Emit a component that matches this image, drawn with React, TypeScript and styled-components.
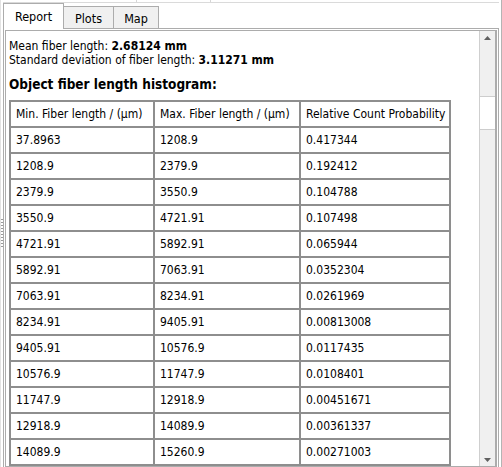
import React from "react";
import styled, { createGlobalStyle } from "styled-components";

const Global = createGlobalStyle`
  html, body { margin: 0; padding: 0; background: #ffffff; }
  body { font-family: "DejaVu Sans Condensed", "DejaVu Sans", sans-serif; color: #000; }
`;

const FONT = `"DejaVu Sans Condensed", "DejaVu Sans", sans-serif`;

const Window = styled.div`
  width: 501px;
  height: 467px;
  border-right: 1px solid #b4b4b4;
  display: flex;
  flex-direction: row;
  overflow: hidden;
  background: #fff;
`;

const LeftEdge = styled.div`
  width: 3px;
  display: flex;
  flex-direction: column;
  justify-content: center;
  border-left: 1px solid #e3e3e3;
  box-sizing: border-box;
`;

const Grip = styled.div`
  width: 2px;
  height: 30px;
  background: repeating-linear-gradient(to bottom, #9a9a9a 0 1px, transparent 1px 3px);
`;

const Main = styled.div`
  width: 496px;
  display: flex;
  flex-direction: column;
`;

const TopStrip = styled.div`
  height: 3px;
  display: flex;
  border-bottom: 1px solid #dadada;
  box-sizing: border-box;
`;

const StripCell = styled.div<{ $w: number }>`
  width: ${(p) => p.$w}px;
  border-right: 1px solid #d6d6d6;
  box-sizing: border-box;
`;

const TabBar = styled.div`
  height: 26px;
  display: flex;
  align-items: flex-end;
  position: relative;
  z-index: 1;
  margin-bottom: -1px;
`;

const Tab = styled.div<{ $active?: boolean; $w: number }>`
  width: ${(p) => p.$w}px;
  height: ${(p) => (p.$active ? 26 : 23)}px;
  box-sizing: border-box;
  border: 1px solid #acacac;
  border-bottom: ${(p) => (p.$active ? "none" : "1px solid #acacac")};
  background: ${(p) => (p.$active ? "#ffffff" : "#f0f0f0")};
  margin-left: ${(p) => (p.$active ? 0 : -1)}px;
  display: flex;
  align-items: center;
  justify-content: center;
  padding-top: ${(p) => (p.$active ? 0 : 2)}px;
  font-family: ${FONT};
  font-size: 12.5px;
  color: #000;
`;

const Pane = styled.div`
  flex: 1;
  border: 1px solid #acacac;
  border-bottom: none;
  padding: 1px 1px 0 1px;
  display: flex;
  flex-direction: column;
  min-height: 0;
`;

const Frame = styled.div`
  flex: 1;
  border: 1px solid #acacac;
  border-right-width: 2px;
  display: flex;
  flex-direction: row;
  min-height: 0;
  overflow: hidden;
`;

const Viewport = styled.div`
  flex: 1;
  overflow: hidden;
  padding: 8px 0 0 3px;
  font-family: ${FONT};
  font-size: 12px;
`;

const InfoLine = styled.div`
  line-height: 14px;
  white-space: nowrap;
`;

const Heading = styled.div`
  font-weight: bold;
  font-size: 13.5px;
  line-height: 16px;
  margin-top: 9px;
  margin-bottom: 8px;
  white-space: nowrap;
`;

const Table = styled.table`
  border-collapse: separate;
  border-spacing: 0;
  border: 1px solid #8e8e8e;
  table-layout: fixed;
  width: 440px;
`;

const Cell = styled.td`
  border: 1px solid #8e8e8e;
  padding: 0 0 0 5px;
  font-family: ${FONT};
  font-size: 12px;
  white-space: nowrap;
  overflow: hidden;
  box-sizing: border-box;
  height: 26px;
`;

const Scrollbar = styled.div`
  width: 15px;
  border-left: 1px solid #cfcfcf;
  display: flex;
  flex-direction: column;
  background: #f0f0f0;
`;

const ArrowBtn = styled.div`
  height: 13px;
  display: flex;
  align-items: center;
  justify-content: center;
  background: #f0f0f0;
`;

const Thumb = styled.div`
  height: 52px;
  background: #f0f0f0;
  border-bottom: 1px solid #cdcdcd;
`;

const ThumbLight = styled.div`
  height: 32px;
  background: #ffffff;
  border-bottom: 1px solid #cdcdcd;
`;

const Track = styled.div`
  flex: 1;
  background: #f0f0f0;
`;

const rows: [string, string, string][] = [
  ["37.8963", "1208.9", "0.417344"],
  ["1208.9", "2379.9", "0.192412"],
  ["2379.9", "3550.9", "0.104788"],
  ["3550.9", "4721.91", "0.107498"],
  ["4721.91", "5892.91", "0.065944"],
  ["5892.91", "7063.91", "0.0352304"],
  ["7063.91", "8234.91", "0.0261969"],
  ["8234.91", "9405.91", "0.00813008"],
  ["9405.91", "10576.9", "0.0117435"],
  ["10576.9", "11747.9", "0.0108401"],
  ["11747.9", "12918.9", "0.00451671"],
  ["12918.9", "14089.9", "0.00361337"],
  ["14089.9", "15260.9", "0.00271003"],
];

const Arrow = ({ up }: { up?: boolean }) => (
  <svg width="7" height="4" viewBox="0 0 7 4">
    <polygon points={up ? "0,4 7,4 3.5,0" : "0,0 7,0 3.5,4"} fill="#606060" />
  </svg>
);

export default function App() {
  return (
    <>
      <Global />
      <Window>
        <LeftEdge>
          <Grip />
        </LeftEdge>
        <Main>
          <TopStrip>
            <StripCell $w={134} />
            <StripCell $w={74} />
          </TopStrip>
          <TabBar>
            <Tab $active $w={61}>Report</Tab>
            <Tab $w={51}>Plots</Tab>
            <Tab $w={46}>Map</Tab>
          </TabBar>
          <Pane>
            <Frame>
              <Viewport>
                <InfoLine>
                  Mean fiber length: <b>2.68124 mm</b>
                </InfoLine>
                <InfoLine>
                  Standard deviation of fiber length: <b>3.11271 mm</b>
                </InfoLine>
                <Heading>Object fiber length histogram:</Heading>
                <Table>
                  <colgroup>
                    <col style={{ width: 144 }} />
                    <col style={{ width: 146 }} />
                    <col style={{ width: 150 }} />
                  </colgroup>
                  <tbody>
                    <tr>
                      <Cell>Min. Fiber length / (µm)</Cell>
                      <Cell>Max. Fiber length / (µm)</Cell>
                      <Cell>Relative Count Probability</Cell>
                    </tr>
                    {rows.map((r, i) => (
                      <tr key={i}>
                        <Cell>{r[0]}</Cell>
                        <Cell>{r[1]}</Cell>
                        <Cell>{r[2]}</Cell>
                      </tr>
                    ))}
                  </tbody>
                </Table>
              </Viewport>
              <Scrollbar>
                <ArrowBtn>
                  <Arrow up />
                </ArrowBtn>
                <Thumb />
                <ThumbLight />
                <Track />
                <ArrowBtn>
                  <Arrow />
                </ArrowBtn>
              </Scrollbar>
            </Frame>
          </Pane>
        </Main>
      </Window>
    </>
  );
}
